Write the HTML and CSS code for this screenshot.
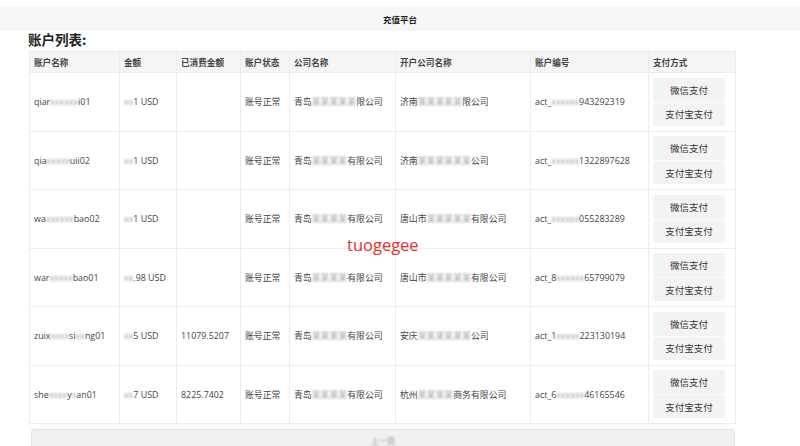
FILE: index.html
```html
<!DOCTYPE html>
<html lang="zh">
<head>
<meta charset="utf-8">
<title>充值平台</title>
<link rel="stylesheet" href="styles.css">
</head>
<body>
<div class="topbar">充值平台</div>
<main class="content">
  <h2 class="title">账户列表:</h2>
  <table class="accounts">
    <colgroup>
      <col style="width:90px"><col style="width:57px"><col style="width:64px"><col style="width:49px">
      <col style="width:106px"><col style="width:135px"><col style="width:118px"><col style="width:87px">
    </colgroup>
    <thead>
      <tr><th>账户名称</th><th>金额</th><th>已消费金额</th><th>账户状态</th><th>公司名称</th><th>开户公司名称</th><th>账户编号</th><th>支付方式</th></tr>
    </thead>
    <tbody>
      <tr>
        <td>qiar<span class="bl">xxxxxx</span>i01</td><td><span class="bl">xx</span>1 USD</td><td></td><td>账号正常</td>
        <td>青岛<span class="bl">某某某某某</span>限公司</td><td>济南<span class="bl">某某某某某</span>限公司</td><td>act_<span class="bl">xxxxxx</span>943292319</td>
        <td class="pay"><div class="btns"><button class="btn">微信支付</button><button class="btn">支付宝支付</button></div></td>
      </tr>
      <tr>
        <td>qia<span class="bl">xxxxx</span>uii02</td><td><span class="bl">xx</span>1 USD</td><td></td><td>账号正常</td>
        <td>青岛<span class="bl">某某某某</span>有限公司</td><td>济南<span class="bl">某某某某某某</span>公司</td><td>act_<span class="bl">xxxxxx</span>1322897628</td>
        <td class="pay"><div class="btns"><button class="btn">微信支付</button><button class="btn">支付宝支付</button></div></td>
      </tr>
      <tr>
        <td>wa<span class="bl">xxxxxx</span>bao02</td><td><span class="bl">xx</span>1 USD</td><td></td><td>账号正常</td>
        <td>青岛<span class="bl">某某某某</span>有限公司</td><td>唐山市<span class="bl">某某某某某</span>有限公司</td><td>act_<span class="bl">xxxxxx</span>055283289</td>
        <td class="pay"><div class="btns"><button class="btn">微信支付</button><button class="btn">支付宝支付</button></div></td>
      </tr>
      <tr>
        <td>war<span class="bl">xxxxx</span>bao01</td><td><span class="bl">xx</span>.98 USD</td><td></td><td>账号正常</td>
        <td>青岛<span class="bl">某某某某</span>有限公司</td><td>唐山市<span class="bl">某某某某某</span>有限公司</td><td>act_8<span class="bl">xxxxxx</span>65799079</td>
        <td class="pay"><div class="btns"><button class="btn">微信支付</button><button class="btn">支付宝支付</button></div></td>
      </tr>
      <tr>
        <td>zuix<span class="bl">xxxx</span>si<span class="bl">xx</span>ng01</td><td><span class="bl">xx</span>5 USD</td><td>11079.5207</td><td>账号正常</td>
        <td>青岛<span class="bl">某某某某</span>有限公司</td><td>安庆<span class="bl">某某某某某某</span>公司</td><td>act_1<span class="bl">xxxxx</span>223130194</td>
        <td class="pay"><div class="btns"><button class="btn">微信支付</button><button class="btn">支付宝支付</button></div></td>
      </tr>
      <tr>
        <td>she<span class="bl">xxxx</span>y<span class="bl">x</span>an01</td><td><span class="bl">xx</span>7 USD</td><td>8225.7402</td><td>账号正常</td>
        <td>青岛<span class="bl">某某某某</span>有限公司</td><td>杭州<span class="bl">某某某某</span>商务有限公司</td><td>act_6<span class="bl">xxxxxx</span>46165546</td>
        <td class="pay"><div class="btns"><button class="btn">微信支付</button><button class="btn">支付宝支付</button></div></td>
      </tr>
    </tbody>
  </table>
  <div class="more"><span class="bl more-text">上一页</span></div>
</main>
<div class="watermark">tuogegee</div>
</body>
</html>
```
FILE: styles.css
```css
html, body {
  margin: 0;
  padding: 0;
  background: #ffffff;
  overflow: hidden;
}
body {
  width: 800px;
  height: 446px;
  position: relative;
  font-family: "Open Sans", "Noto Sans CJK SC", sans-serif;
  color: #333333;
}
.topbar {
  margin-top: 7px;
  height: 24px;
  line-height: 24px;
  background: #f6f6f6;
  text-align: center;
  font-family: "Noto Sans CJK SC", sans-serif;
  font-size: 8.5px;
  font-weight: 700;
  color: #222222;
}
.content {
  padding-left: 29px;
}
.title {
  margin: 0 0 0 -1px;
  height: 20px;
  line-height: 16px;
  font-family: "Noto Sans CJK SC", sans-serif;
  font-size: 13.5px;
  font-weight: 700;
  color: #222222;
}
.accounts {
  border-collapse: collapse;
  table-layout: fixed;
  width: 706px;
  font-size: 8.9px;
  font-family: "Open Sans", "Noto Sans CJK SC", sans-serif;
  color: #444444;
}
.accounts th, .accounts td {
  border: 1px solid #ececec;
  padding: 0 0 0 4px;
  text-align: left;
  white-space: nowrap;
  overflow: hidden;
}
.accounts th {
  height: 20px;
  background: #f5f5f5;
  font-weight: 700;
  font-family: "Noto Sans CJK SC", sans-serif;
  font-size: 8.6px;
  color: #444444;
}
.accounts td {
  height: 57.5px;
}
.accounts td.pay {
  padding: 0 0 0 4px;
}
.btns {
  display: flex;
  flex-direction: column;
  width: 72px;
}
.btn {
  margin: 0;
  height: 24px;
  border: none;
  border-radius: 3px;
  background: #f3f3f3;
  font-family: "Noto Sans CJK SC", sans-serif;
  font-size: 9.5px;
  color: #333333;
  padding: 0;
}
.btn + .btn {
  border-top: 1px solid #fafafa;
}
.bl {
  color: #9a9a9a;
  filter: blur(1.2px);
}
.more {
  margin: 5px 0 0 2px;
  width: 702px;
  height: 30px;
  background: #f1f1f1;
  border: 1px solid #e3e3e3;
  border-radius: 3px;
  text-align: center;
  line-height: 10px;
}
.more-text {
  display: inline-block;
  font-family: "Noto Sans CJK SC", sans-serif;
  font-size: 8px;
  color: #888888;
  margin-top: 6px;
}
.watermark {
  position: absolute;
  left: 347px;
  top: 233px;
  font-family: "Open Sans", sans-serif;
  font-size: 16.5px;
  color: #e0302f;
}
```
